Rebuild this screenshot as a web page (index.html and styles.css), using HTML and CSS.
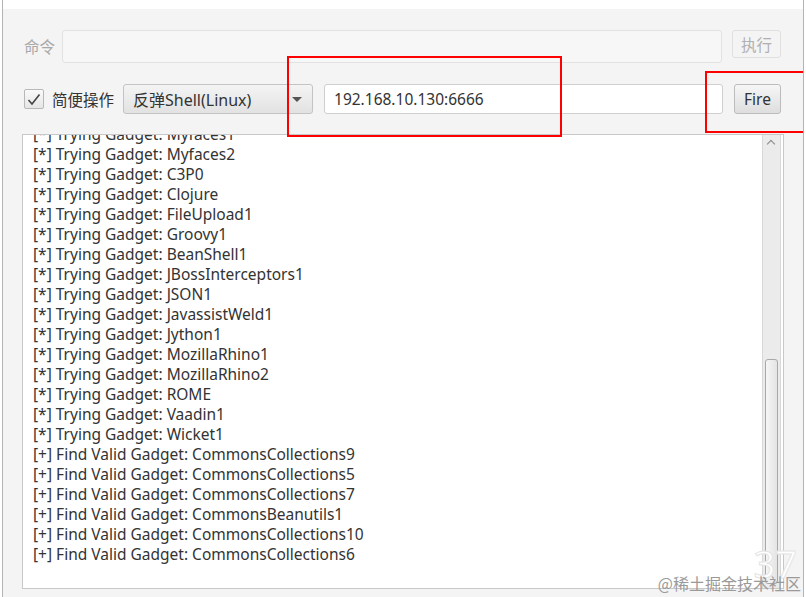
FILE: index.html
```html
<!DOCTYPE html>
<html lang="zh-CN">
<head>
    <meta charset="UTF-8">
    <meta name="viewport" content="width=device-width, initial-scale=1.0">
    <title>Shiro Attack</title>
    <link rel="stylesheet" href="styles.css">
</head>
<body>
    <div class="janela">
        <div class="faixa"></div>
        <div class="painel">
            <div class="linha linha-comando">
                <span class="rotulo">命令</span>
                <input type="text" class="campo campo-desativado" disabled>
                <button class="botao botao-desativado" disabled>执行</button>
            </div>
            <div class="linha linha-shell">
                <label class="caixa">
                    <span class="marca">
                        <svg width="14" height="13" viewBox="0 0 14 13"><path d="M1.5 7 L5 11 L12.5 1.5" fill="none" stroke="#444" stroke-width="1.6"/></svg>
                    </span>
                    <span class="rotulo-caixa">简便操作</span>
                </label>
                <div class="combo">
                    <span>反弹Shell(Linux)</span>
                    <span class="seta"></span>
                </div>
                <input type="text" class="campo campo-ip" value="192.168.10.130:6666">
                <button class="botao botao-fire">Fire</button>
            </div>
            <div class="saida">
                <div class="linhas">
                    <div>[*] Trying Gadget: Myfaces1</div>
                    <div>[*] Trying Gadget: Myfaces2</div>
                    <div>[*] Trying Gadget: C3P0</div>
                    <div>[*] Trying Gadget: Clojure</div>
                    <div>[*] Trying Gadget: FileUpload1</div>
                    <div>[*] Trying Gadget: Groovy1</div>
                    <div>[*] Trying Gadget: BeanShell1</div>
                    <div>[*] Trying Gadget: JBossInterceptors1</div>
                    <div>[*] Trying Gadget: JSON1</div>
                    <div>[*] Trying Gadget: JavassistWeld1</div>
                    <div>[*] Trying Gadget: Jython1</div>
                    <div>[*] Trying Gadget: MozillaRhino1</div>
                    <div>[*] Trying Gadget: MozillaRhino2</div>
                    <div>[*] Trying Gadget: ROME</div>
                    <div>[*] Trying Gadget: Vaadin1</div>
                    <div>[*] Trying Gadget: Wicket1</div>
                    <div>[+] Find Valid Gadget: CommonsCollections9</div>
                    <div>[+] Find Valid Gadget: CommonsCollections5</div>
                    <div>[+] Find Valid Gadget: CommonsCollections7</div>
                    <div>[+] Find Valid Gadget: CommonsBeanutils1</div>
                    <div>[+] Find Valid Gadget: CommonsCollections10</div>
                    <div>[+] Find Valid Gadget: CommonsCollections6</div>
                </div>
                <div class="rolagem">
                    <span class="seta-cima"></span>
                    <span class="polegar"></span>
                </div>
            </div>
        </div>
        <div class="destaque destaque-ip"></div>
        <div class="destaque destaque-fire"></div>
        <div class="numero">37</div>
        <div class="marca-agua">@稀土掘金技术社区</div>
    </div>
</body>
</html>
```

FILE: styles.css
```css
body {
    margin: 0;
    background-color: #ffffff;
    font-family: "Noto Sans", "Noto Sans CJK SC", sans-serif;
    color: #333;
}
.janela {
    position: relative;
    width: 800px;
    height: 597px;
    margin-left: 2px;
    border-left: 1px solid #b4b4b4;
    border-right: 1px solid #b4b4b4;
    overflow: hidden;
}
.faixa {
    height: 9px;
    background-color: #fff;
}
.painel {
    background-color: #f4f4f4;
    height: 588px;
    padding: 21px 19px 0 19px;
    box-sizing: border-box;
}
.linha {
    display: flex;
    align-items: center;
}
.linha-comando {
    height: 33px;
}
.rotulo {
    width: 40px;
    padding-left: 2px;
    box-sizing: border-box;
    font-size: 15.5px;
    color: #a8a8a8;
}
.campo {
    height: 100%;
    box-sizing: border-box;
    border: 1px solid #d6d6d6;
    border-radius: 3px;
    font-family: inherit;
    font-size: 15.5px;
    color: #333;
    padding: 0 9px;
    outline: none;
}
.campo-desativado {
    width: 660px;
    background-color: #f7f7f7;
    border-color: #e2e2e2;
}
.botao {
    font-family: inherit;
    font-size: 15.5px;
    border-radius: 3px;
    padding: 0;
}
.botao-desativado {
    width: 49px;
    height: 28px;
    margin-left: 10px;
    align-self: flex-start;
    background: #f4f4f4;
    border: 1px solid #e0e0e0;
    color: #b0b0b0;
}
.linha-shell {
    margin-top: 21px;
    height: 30px;
}
.caixa {
    display: flex;
    align-items: center;
    margin-left: 2px;
}
.marca {
    width: 20px;
    height: 20px;
    box-sizing: border-box;
    border: 1px solid #b8b8b8;
    border-radius: 2px;
    background: linear-gradient(#fafafa, #e6e6e6);
    display: flex;
    align-items: center;
    justify-content: center;
}
.rotulo-caixa {
    margin-left: 8px;
    font-size: 15.5px;
    color: #333;
}
.combo {
    width: 190px;
    height: 30px;
    margin-left: 9px;
    box-sizing: border-box;
    border: 1px solid #c4c4c4;
    border-radius: 3px;
    background: linear-gradient(#f4f4f4, #e2e2e2);
    display: flex;
    align-items: center;
    justify-content: space-between;
    padding: 0 10px 0 9px;
    font-size: 16px;
}
.seta {
    width: 0;
    height: 0;
    border-left: 5px solid transparent;
    border-right: 5px solid transparent;
    border-top: 5px solid #555;
}
.campo-ip {
    width: 399px;
    margin-left: 11px;
    background-color: #fff;
    border-color: #cfcfcf;
}
.botao-fire {
    width: 47px;
    height: 30px;
    margin-left: 11px;
    background: linear-gradient(#f6f6f6, #dedede);
    border: 1px solid #bcbcbc;
    color: #333;
}
.saida {
    display: flex;
    margin-top: 20px;
    height: 455px;
    box-sizing: border-box;
    border: 1px solid #c8c8c8;
    background-color: #fff;
    overflow: hidden;
}
.linhas {
    flex: 1;
    margin-top: -11px;
    padding-left: 10px;
    font-size: 15.5px;
    line-height: 20px;
    color: #333;
}
.rolagem {
    width: 17px;
    margin-right: 2px;
    position: relative;
    background-color: #ebebeb;
    border-left: 1px solid #d8d8d8;
    border-right: 1px solid #d8d8d8;
}
.seta-cima {
    position: absolute;
    top: 6px;
    left: 5px;
    width: 5px;
    height: 5px;
    border-left: 1px solid #888;
    border-top: 1px solid #888;
    transform: rotate(45deg);
}
.polegar {
    position: absolute;
    top: 224px;
    left: 2px;
    right: 2px;
    bottom: 4px;
    border: 1px solid #a8a8a8;
    border-radius: 3px;
    background: linear-gradient(90deg, #f6f6f6, #e4e4e4);
}
.destaque {
    position: absolute;
    border: 2px solid #f00;
    box-sizing: border-box;
}
.destaque-ip {
    left: 284px;
    top: 56px;
    width: 275px;
    height: 81px;
}
.destaque-fire {
    left: 702px;
    top: 71px;
    width: 120px;
    height: 62px;
}
.numero {
    position: absolute;
    right: 6px;
    top: 544px;
    font-size: 38px;
    line-height: 1;
    color: #fff;
    -webkit-text-stroke: 1px #e4e4e4;
}
.marca-agua {
    position: absolute;
    right: 2px;
    bottom: 4px;
    font-size: 16px;
    line-height: 20px;
    color: #9a9a9a;
    font-family: "Noto Sans CJK SC", sans-serif;
}
```
